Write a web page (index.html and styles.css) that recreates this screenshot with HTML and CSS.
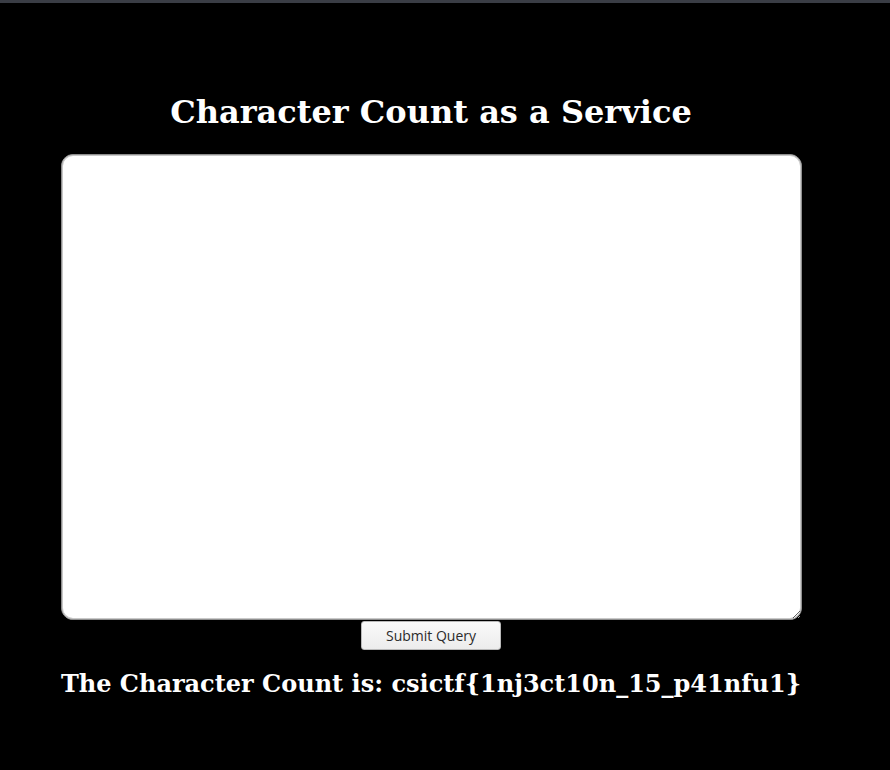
FILE: index.html
```html
<!DOCTYPE html>
<html>
<head>
<meta charset="utf-8">
<title>Character Count as a Service</title>
<link rel="stylesheet" href="styles.css">
</head>
<body>
<div class="topbar"></div>
<main class="page">
  <h1 class="title">Character Count as a Service</h1>
  <form class="form">
    <textarea class="input"></textarea>
    <button type="button" class="submit">Submit Query</button>
  </form>
  <h2 class="result">The Character Count is: csictf{1nj3ct10n_15_p41nfu1}</h2>
</main>
</body>
</html>
```

FILE: styles.css
```css
html, body {
  margin: 0;
  padding: 0;
  background: #000;
}
body {
  font-family: "DejaVu Serif", serif;
  color: #fff;
}
.topbar {
  height: 3px;
  background: #3a3d45;
}
.page {
  width: 846px;
  margin: 0 0 0 8px;
  display: flex;
  flex-direction: column;
  align-items: center;
}
.title {
  margin: 90px 0 0;
  font-size: 32px;
  line-height: 38px;
  font-weight: bold;
}
.form {
  margin-top: 23px;
  display: flex;
  flex-direction: column;
  align-items: center;
}
.input {
  width: 741px;
  height: 466px;
  box-sizing: border-box;
  border: 1px solid #8f8f8f;
  box-shadow: inset 0 0 0 1px #c8c8c8;
  border-radius: 12px;
  background: #fff;
  resize: both;
  display: block;
  margin: 0;
}
.submit {
  margin-top: 1px;
  width: 140px;
  height: 29px;
  font-family: "Open Sans", "Noto Sans", sans-serif;
  font-size: 14px;
  color: #2b2b2b;
  background: linear-gradient(#fafafa, #ececec);
  border: 1px solid #b9b9b9;
  border-radius: 3px;
  padding: 0;
}
.result {
  margin: 19px 0 0;
  font-size: 24px;
  line-height: 30px;
  font-weight: bold;
}
```
